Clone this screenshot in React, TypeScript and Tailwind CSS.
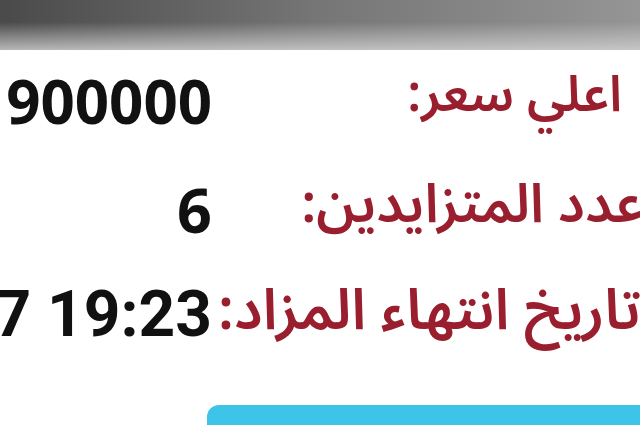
import React from 'react'

type Row = {
  label: string
  value: string
  valueFont: string
  valueSize: string
  labelBox: string
  labelSize: string
  rowBox: string
}

const rows: Row[] = [
  {
    label: 'اعلي سعر:',
    value: '900000',
    valueFont: "'Open Sans', sans-serif",
    valueSize: 'text-[60px]',
    labelBox: 'text-right pr-[18px] pb-[12px]',
    labelSize: 'text-[50px]',
    rowBox: 'h-[110px]',
  },
  {
    label: 'عدد المتزايدين:',
    value: '6',
    valueFont: "'Open Sans', sans-serif",
    valueSize: 'text-[61px]',
    labelBox: 'text-right -mr-[4px] pb-[8px]',
    labelSize: 'text-[54px]',
    rowBox: 'h-[106px]',
  },
  {
    label: 'تاريخ انتهاء المزاد:',
    value: '2023-12-27 19:23',
    valueFont: 'Roboto, sans-serif',
    valueSize: 'text-[64px]',
    labelBox: 'text-left pl-[6px] pb-[8px]',
    labelSize: 'text-[57px]',
    rowBox: 'h-[106px]',
  },
]

export default function App() {
  return (
    <div className="w-[640px] h-[425px] overflow-hidden bg-white flex flex-col">
      {/* toolbar shadow */}
      <div className="h-[50px] shrink-0 bg-gradient-to-r from-[#4a4a4a] via-[#767676] to-[#959595] relative">
        <div className="absolute inset-x-0 bottom-0 h-[28px] bg-gradient-to-b from-transparent to-[#d2d2d2]/80" />
      </div>

      <div className="flex flex-col -mt-[4px]">
        {rows.map((r, i) => (
          <div key={i} className={`flex items-center ${r.rowBox}`}>
            <div dir="rtl" className="w-[212px] shrink-0 text-right whitespace-nowrap">
              <span
                dir="ltr"
                className={`inline-block ${r.valueSize} font-bold text-[#111] leading-none`}
                style={{ fontFamily: r.valueFont }}
              >
                {r.value}
              </span>
            </div>
            <div className={`flex-1 min-w-0 whitespace-nowrap ${r.labelBox}`}>
              <span
                dir="rtl"
                className={`inline-block ${r.labelSize} font-semibold leading-none text-[#9a1f2e]`}
                style={{ fontFamily: "'Noto Sans Arabic', 'DejaVu Sans', sans-serif" }}
              >
                {r.label}
              </span>
            </div>
          </div>
        ))}
      </div>

      {/* action button */}
      <div className="flex-1 flex items-end">
        <div className="ml-[207px] w-full h-[20px] rounded-tl-[12px] bg-[#3ec3e9]" />
      </div>
    </div>
  )
}
